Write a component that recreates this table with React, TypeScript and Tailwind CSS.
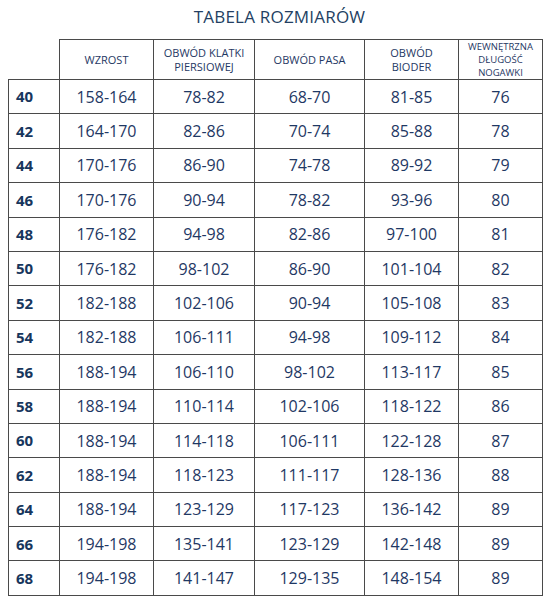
import React from 'react';

const headers = [
  ['WZROST'],
  ['OBWÓD KLATKI', 'PIERSIOWEJ'],
  ['OBWÓD PASA'],
  ['OBWÓD', 'BIODER'],
];

const rows: [string, string, string, string, string, string][] = [
  ['40', '158-164', '78-82', '68-70', '81-85', '76'],
  ['42', '164-170', '82-86', '70-74', '85-88', '78'],
  ['44', '170-176', '86-90', '74-78', '89-92', '79'],
  ['46', '170-176', '90-94', '78-82', '93-96', '80'],
  ['48', '176-182', '94-98', '82-86', '97-100', '81'],
  ['50', '176-182', '98-102', '86-90', '101-104', '82'],
  ['52', '182-188', '102-106', '90-94', '105-108', '83'],
  ['54', '182-188', '106-111', '94-98', '109-112', '84'],
  ['56', '188-194', '106-110', '98-102', '113-117', '85'],
  ['58', '188-194', '110-114', '102-106', '118-122', '86'],
  ['60', '188-194', '114-118', '106-111', '122-128', '87'],
  ['62', '188-194', '118-123', '111-117', '128-136', '88'],
  ['64', '188-194', '123-129', '117-123', '136-142', '89'],
  ['66', '194-198', '135-141', '123-129', '142-148', '89'],
  ['68', '194-198', '141-147', '129-135', '148-154', '89'],
];

const App = () => {
  return (
    <div className="w-[549px] h-[600px] bg-white font-['Open_Sans',sans-serif] text-[#1f3864] overflow-hidden">
      {/* Title */}
      <div className="h-[39px] flex items-center justify-center pl-[10px] pb-[6px]">
        <h1 className="text-[17px] text-[#233f63] tracking-[0.2px]">TABELA ROZMIARÓW</h1>
      </div>

      {/* Size table */}
      <div className="ml-2 w-[535px] grid grid-cols-[52px_94px_101px_110px_94px_84px]">
        {/* Header row */}
        <div className="h-[41px] border-r border-b border-[#4a4a4a]" />
        {headers.map((lines, i) => (
          <div
            key={i}
            className="h-[41px] border-t border-r border-b border-[#4a4a4a] flex flex-col items-center justify-center text-[11px] leading-[14px]"
          >
            {lines.map((l) => (
              <span key={l}>{l}</span>
            ))}
          </div>
        ))}
        <div className="h-[41px] border-t border-r border-b border-[#4a4a4a] flex flex-col items-center justify-center text-[9.5px] leading-[13px]">
          <span>WEWNĘTRZNA</span>
          <span>DŁUGOŚĆ</span>
          <span>NOGAWKI</span>
        </div>

        {/* Body rows */}
        {rows.map((row) => (
          <React.Fragment key={row[0]}>
            <div className="h-[34.4px] border-l border-r border-b border-[#4a4a4a] flex items-center pl-[7px] text-[15px] font-bold text-[#17365d]">
              {row[0]}
            </div>
            {row.slice(1).map((v, j) => (
              <div
                key={j}
                className="h-[34.4px] border-r border-b border-[#4a4a4a] flex items-center justify-center text-[16px]"
              >
                {v}
              </div>
            ))}
          </React.Fragment>
        ))}
      </div>
    </div>
  );
};

export default App;
